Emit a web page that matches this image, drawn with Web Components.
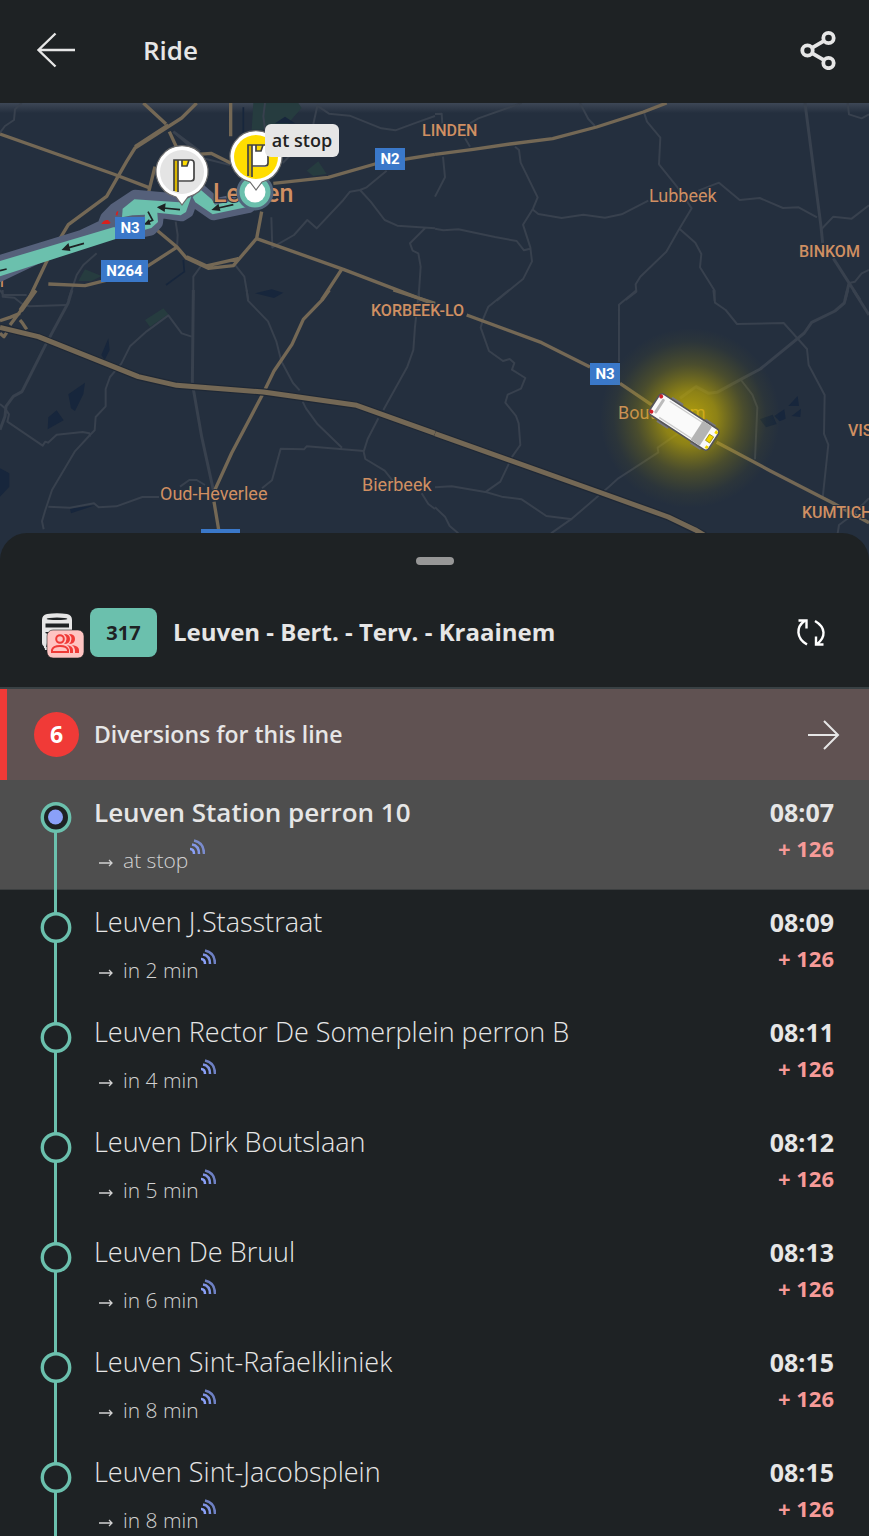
<!DOCTYPE html>
<html lang="en">
<head>
<meta charset="utf-8">
<meta name="viewport" content="width=device-width, initial-scale=1">
<title>Ride</title>
<style>
  html, body {
    height: 100%;
    margin: 0;
    background: #1e2224;
  }
  body {
    --surface: #1e2224;
    --text: #e6e6e6;
    --line: #6bc0ad;
    --alert: #f03a37;
    --late: #f69a98;
    --live: #8aa0f8;
    color: var(--text);
    font-family: "Open Sans", "Noto Sans", sans-serif;
  }
</style>
</head>
<body>
<ride-app>
  <ride-header slot="header">Ride</ride-header>
  <ride-map slot="map"></ride-map>
  <ride-sheet>
    <line-header slot="head" line="317">Leuven - Bert. - Terv. - Kraainem</line-header>
    <diversion-link slot="head" count="6">Diversions for this line</diversion-link>
    <ride-stop current time="08:07" delay="+ 126" eta="at stop">Leuven Station perron 10</ride-stop>
    <ride-stop time="08:09" delay="+ 126" eta="in 2 min">Leuven J.Stasstraat</ride-stop>
    <ride-stop time="08:11" delay="+ 126" eta="in 4 min">Leuven Rector De Somerplein perron B</ride-stop>
    <ride-stop time="08:12" delay="+ 126" eta="in 5 min">Leuven Dirk Boutslaan</ride-stop>
    <ride-stop time="08:13" delay="+ 126" eta="in 6 min">Leuven De Bruul</ride-stop>
    <ride-stop time="08:15" delay="+ 126" eta="in 8 min">Leuven Sint-Rafaelkliniek</ride-stop>
    <ride-stop time="08:15" delay="+ 126" eta="in 8 min">Leuven Sint-Jacobsplein</ride-stop>
  </ride-sheet>
</ride-app>

<script>
'use strict';

/**
 * Base class, renders the template of the element in an open shadow root
 */
class RideElement extends HTMLElement {
  constructor() {
    super();
    this.root = this.attachShadow({mode: 'open'});
  }
  connectedCallback() {
    this.root.innerHTML = this.template;
  }
}

/**
 * Page frame: header, map and the sheet that lies over the map
 */
class RideApp extends RideElement {
  get template() {
    return `
    <style>
      :host {
        display: flex;
        flex-direction: column;
        height: 100vh;
        overflow: hidden;
      }
      main {
        display: flex;
        flex-direction: column;
        flex: 1;
        min-height: 0;
      }
    </style>
    <slot name="header"></slot>
    <main>
      <slot name="map"></slot>
      <slot></slot>
    </main>`;
  }
}
customElements.define('ride-app', RideApp);

class RideHeader extends RideElement {
  get template() {
    return `
    <style>
      :host {
        display: block;
        flex: none;
        background: var(--surface);
      }
      header {
        display: flex;
        align-items: center;
        height: 103px;
        box-sizing: border-box;
        padding: 0 29px 3px 32px;
      }
      h1 {
        flex: 1;
        margin: 0 0 0 63px;
        font-size: 26px;
        line-height: 36px;
        font-weight: 600;
      }
      button {
        display: flex;
        padding: 4px;
        border: 0;
        background: none;
        color: inherit;
      }
      svg {
        fill: none;
        stroke: currentColor;
      }
    </style>
    <header>
      <button aria-label="Back">
        <svg width="40" height="40" viewBox="0 0 40 40" stroke-width="2.4">
          <path d="M39 20H2.500M19.500 3.500L2.500 20l17 16.500"/>
        </svg>
      </button>
      <h1><slot></slot></h1>
      <button aria-label="Share">
        <svg width="36" height="40" viewBox="0 0 36 40" stroke-width="3.800">
          <circle cx="7.500" cy="20.500" r="5.200"/>
          <circle cx="28.500" cy="8" r="5.200"/>
          <circle cx="28.500" cy="33" r="5.200"/>
          <path d="M12 17.800l12-7M12 23.200l12 7"/>
        </svg>
      </button>
    </header>`;
  }
}
customElements.define('ride-header', RideHeader);

/**
 * Map with the route, the stops and the vehicle.
 * Roads are drawn on a grid three times as fine as the one of the labels,
 * cut in four tiles.
 */
class RideMap extends RideElement {
  shield(x, y, width, text) {
    return `<g class="shield"><rect x="${x}" y="${y}" width="${width}" height="22"/>
      <text x="${x + width / 2}" y="${y + 16}">${text}</text></g>`;
  }
  marker(x, y, color) {
    return `<g transform="translate(${x} ${y})">
      <path d="M0 33l-6-8a26 26 0 1 1 12 0z" fill="#fff" stroke="#6b6b6b" stroke-width="1.200"/>
      <circle r="22" fill="${color}"/>
      <path d="M-8-12h4v32l-4-1z" fill="#d9b600"/>
      <path d="M-4-12h14q2 0 2 2V7q0 3-3 3H-4z" fill="#fff"/>
      <path d="M0-12h7l-2 6h-5z" fill="#ffdd00"/>
      <path d="M-8 19v-31H9q3 0 3 3V6q0 3-3 3H-4M-4-12v32M0-12v6h5l2-6" fill="none" stroke="#444" stroke-width="1.700"/>
    </g>`;
  }
  get template() {
    return `
    <style>
      :host {
        display: block;
        flex: none;
        height: 457px;
        overflow: hidden;
        background: #242f3e;
      }
      svg {
        display: block;
        width: 100%;
        height: 100%;
        font-family: Roboto, sans-serif;
      }
      .park { fill: #263c3f; }
      .water { fill: #17263c; }
      .road, .main, .local {
        fill: none;
        stroke: #38414e;
        stroke-width: 6;
        stroke-linejoin: round;
      }
      .local { stroke-width: 9; }
      .main { stroke: #746855; stroke-width: 10; }
      .edge { fill: none; stroke: #1f2835; stroke-width: 22; }
      .wide { stroke-width: 15; }
      .town, .hamlet, .city {
        fill: #d08f62;
        stroke: #242f3e;
        stroke-width: 2;
        paint-order: stroke;
      }
      .town { font-size: 18px; }
      .hamlet { font-size: 16px; font-weight: 500; }
      .city { font-size: 25px; font-weight: 500; }
      .shield rect { fill: #3a78c9; }
      .shield text {
        fill: #fff;
        font-size: 15px;
        font-weight: 700;
        text-anchor: middle;
      }
      .tip { fill: #222; font: 600 18px "Open Sans", "Noto Sans", sans-serif; text-anchor: middle; }
    </style>
    <svg viewBox="0 103 869 457" preserveAspectRatio="xMidYMin slice" role="img" aria-label="Map of the ride">
      <defs>
        <radialGradient id="glow">
          <stop offset="0" stop-color="#d8bd00" stop-opacity=".8"/>
          <stop offset=".3" stop-color="#c8b000" stop-opacity=".64"/>
          <stop offset=".6" stop-color="#b09c00" stop-opacity=".27"/>
          <stop offset=".85" stop-color="#a09000" stop-opacity=".06"/>
          <stop offset="1" stop-color="#a09000" stop-opacity="0"/>
        </radialGradient>
        <linearGradient id="shade" x2="0" y2="1">
          <stop stop-color="#3d4756"/>
          <stop offset="1" stop-color="#3d4756" stop-opacity="0"/>
        </linearGradient>
      </defs>
      <rect y="103" width="869" height="10" fill="url(#shade)"/>

      <g transform="scale(.33333)">
        <!-- parks and water -->
        <path class="park" d="M760 309l-5 80 45 0 40 20 30-45 35-40-10-15h-60zM920 512l35-28 25 38-40 6zM255 808l50 20-30 15-40 0zM435 960l55-35 15 18-55 38z"/>
        <path class="water" d="M825 370l30-20 30 20zM765 880l50-12 35 10-28 16zM325 1015l4 35-15 30-10-15zM255 1148l-5 35-25 50-12-8-8-42zM170 1231l21 30-48 27 2-36zM0 1405l28 15v40L0 1490zM210 1526l75-10-72 24z"/>
        <path d="M550 780l3 35-55 40M730 322v95" fill="none" stroke="#17263c" stroke-width="5"/>

        <!-- north west -->
        <path class="road" d="M65 309L45 328 42 360 15 378 0 398M795 309l-5 40 8 60 70 60-20 20M940 372l12-55 35 24 62 6 95 38 42 6 65-24 54-19M1160 512l-60 50-20 8-30 5-20 25-80 85-28-25-40 45-65 37-3-90M1080 570l32 35 42 55 38 17 113 8M1275 685l-45 45 8 22 17 8 7 40-5 75v30M527 665l6 40-2 40M705 795l28 35 12 70M605 795l-25 35v70M290 760l-40 35-20 30-25 75M520 395l90 80 80 20M0 870l10 15 70 0"/>
        <path class="local" d="M520 395l80 60"/>
        <path class="main" d="M0 402l340 120 105 40M430 309l68 63M508 395l60 130 60 120M590 309l-45 45-140 90-25 40-60 105-115 85-60 100L85 900M405 440l100-65M568 465l65-5 60 30M692 309v100M445 580l20-80M470 690l60 50 30 35 65 30 75-8 70-82 15-80M560 770l60 28 95-22M145 852l110 5 60-15 130-45 85-55M820 550l165-18 140-40 180-29M770 716l260 92 275 105M1025 808L965 900"/>

        <!-- north east -->
        <g transform="translate(1305 0)">
          <path class="road" d="M0 342l20-1 2 30M105 370l25-15 130-46M435 309l25 48 20 21M90 415l15 25M24 470l6 62-30 58M240 440l12 10 5 38 51 104-14 34-30 48 22 68 5 42-26 52-80 66M292 628l18 14 70 12 65-10 65 9 50-10 80-41M0 686l25 5 45-3 110 23 65 12 22 28 18-5M628 340l8 25 40 48-4 80 64 80 34 52-36 60-40 70-78 75-14 23 2 22-32 25M735 688l46 40 18 34-4 40 44 70v30M790 572l62-24 62 52 60-6 70 30 47-2 55 30M1157 690l38-40 55 6 52-40M1238 309l4 34 38 12 22-12M1302 810l-22 10-20 25-18 4"/>
          <path class="local" d="M1110 309l48 370 5 50M1195 775l80 125M1242 850l-12 50"/>
          <path class="main" d="M0 463l115-15 110-16 128-16 132-35 140-45 70-27"/>
        </g>

        <!-- south west -->
        <g transform="translate(0 870)">
          <path class="road" d="M8 0v20l35 3 25 20 20 6 112-4M740 0l4 32 60 62 25 60 15 60 35 65 20 22M908 335l10 20 35 48 73 70M1257 0l-12 110-5 70-18 50-72 130M1135 385l-32 62-12 38 5 22 58 35 40 50M1265 610l20 32 20 15M1092 483l-172-14-8 9-70-2-26 95-30 24M575 140l-30-10-40-54-65 48-50 45-26 52-34 40-13 36v52l-30 32-3 40-14 14-46 50-68 115-20 60-10 34 5 24M270 440l-2-10-20-4-78 8-26 24-8-3-8 12L22 395l5-22-12-18-15-13M145 650l65 3 72-13 14 12 53-3 78-28h50M540 590l28-20 22 0 25 15"/>
          <path class="local" d="M216 0l-12 40-70 130-68 135-26 14-22 30-3 30-15 40M580 0l-3 280 28 160 36 165"/>
          <path class="main" d="M106 0L60 65 30 105M60 70l-30 12-30 10M60 90l8 10 12 18M0 130l12 10 8-12M988 0l-20 28-58 60-34 75-54 80-32 66-95 180-50 110M642 635l15 90M1180 0l125 40"/>
          <path d="M62 62L106 0" stroke="#746855" stroke-width="15"/>
          <path class="edge" d="M0 112l115 28 120 48 180 72 115 26 260 20 280 40 235 84"/>
          <path class="main wide" d="M0 112l115 28 120 48 180 72 115 26 260 20 280 40 235 84"/>
        </g>

        <!-- south east -->
        <g transform="translate(1305 870)">
          <path class="road" d="M222 0l-62 50-15 35-8 28 25 70 42 30 20-6 14 12-7 20 40 25-13 32-40 18-7 24 32 40 8 22 5 65-24 34-36 76-43 30M605 0l-53 44v172M835 0l5 38 32 22 34 42 140-3 70 78 5 48 48 90-2 117 13 32-17 160M0 592l50-3 105 18 45 13 60 8 74 50 78 10M0 652l30 28 14 28 26 22M348 730l64-45 110-95 28-25 120-78-2-14 112-78M918 270l34 44 15 38-7 156M1302 625l-50 50-40 30-4 25"/>
          <path class="local" d="M735 325l48-35 38 20 25-3 70-38 60-32 132-108 22-32 70-34 28-24 10-39M1255 0l47 75"/>
          <path class="main" d="M95 75l225 83 145 73M555 280l95 65M845 457l160 85 190 98 107 58"/>
          <path class="edge" d="M0 431l500 178 200 72 110 55"/>
          <path class="main wide" d="M0 431l500 178 200 72 80 38 50 30"/>
          <path class="water" d="M975 388l38-14 12 28-32 10zM1018 378l30-20 4 28-18 8zM1060 348l28-30 4 30zM1070 378l28-22-2 25z"/>
        </g>
      </g>

      <!-- place names -->
      <text class="hamlet" x="422" y="136">LINDEN</text>
      <text class="town" x="649" y="202">Lubbeek</text>
      <text class="hamlet" x="799" y="257">BINKOM</text>
      <text class="hamlet" x="371" y="316">KORBEEK-LO</text>
      <text class="town" x="618" y="419">Boutersem</text>
      <text class="hamlet" x="848" y="436">VIS</text>
      <text class="town" x="160" y="500">Oud-Heverlee</text>
      <text class="town" x="362" y="491">Bierbeek</text>
      <text class="hamlet" x="802" y="518">KUMTICH</text>
      <text class="town" x="4" y="287" text-anchor="end">n</text>

      <!-- route -->
      <g transform="scale(.33333)">
        <g id="route" fill="#55607a" stroke="#55607a" stroke-width="38" stroke-linejoin="round">
          <path d="M-20 790L340 680l60 18 52-10 18-20 2-18-8-18 81 13 17-10 16-45-38 10-135-12-60 40-25 25-10 25L-20 835z"/>
          <path d="M578 592l22-22 35 30 12 14 90-20 10 26-107 22-52-36z"/>
        </g>
        <path fill="#d9201c" d="M304 672q8-14 20-12l8 8-5 4zM347 645l3-10 5-2-3 14z"/>
        <path fill="#6bc0ad" d="M-10 786L340 682l90 0 5-38-38 2-31 6 2-26 35-28 135 9 36-17-16 46-16 10-70-8 2 28-20 18-30 8L-10 832z"/>
        <path fill="#6bc0ad" d="M578 592l22-24 35 30 10 16 90-20 10 26-107 23-52-36z"/>
        <g stroke="#1e2224" stroke-width="5" fill="none">
          <path d="M540 629l-50-5M700 614l-45 10M252 730l-45 13M0 812l20-5M444 635l14 26-16 6"/>
          <path fill="#1e2224" d="M476 622l18-8-2 18zM640 628l14-12 4 14zM190 748l14-14 4 16zM436 672l10-10 3 10z"/>
        </g>
      </g>
      <text class="city" x="213" y="202">Leuven</text>
      <circle cx="255" cy="192" r="17" fill="#6bc0ad" stroke="#52657c" stroke-width="3"/>
      <circle cx="255" cy="192" r="10.500" fill="#fff"/>
      ${this.shield(375, 148, 30, 'N2')}
      ${this.shield(115, 217, 30, 'N3')}
      ${this.shield(101, 260, 47, 'N264')}
      ${this.shield(590, 363, 30, 'N3')}
      <rect x="201" y="529" width="39" height="22" fill="#3a78c9"/>
      ${this.marker(182, 172, '#e4e4e4')}
      ${this.marker(256, 157, '#ffdd00')}
      <rect x="265" y="124" width="74" height="33" rx="6" fill="#e6e6e6"/>
      <text class="tip" x="302" y="147">at stop</text>

      <!-- vehicle -->
      <circle cx="690" cy="418" r="90" fill="url(#glow)"/>
      <g transform="translate(684 422) rotate(33) scale(.33333)">
        <path d="M-70-40h40M50-40h36M-70 40h40M50 40h36" stroke="#77777c" stroke-width="9"/>
        <rect x="-106" y="-37" width="212" height="74" rx="12" fill="#fafafa" stroke="#55555a" stroke-width="5"/>
        <rect x="-92" y="-25" width="9" height="50" rx="4" fill="#bbb"/>
        <path d="M-70-29H46M-70 29H46" stroke="#ccc" stroke-width="4"/>
        <path d="M46-34h32V34H46z" fill="#b4b4b4"/>
        <path d="M84-11h15v22H84z" fill="#f2d600" stroke="#8a7900" stroke-width="2"/>
        <path d="M94-32l9 2v8h-9zM94 32l9-2v-8h-9z" fill="#f2d600"/>
        <circle cx="-99" cy="-27" r="6" fill="#d0202a"/>
        <circle cx="-99" cy="27" r="6" fill="#d0202a"/>
      </g>
    </svg>`;
  }
}
customElements.define('ride-map', RideMap);

/**
 * Bottom sheet, pulled up over the lower edge of the map
 */
class RideSheet extends RideElement {
  get template() {
    return `
    <style>
      :host {
        display: flex;
        flex-direction: column;
        flex: 1;
        min-height: 0;
        margin-top: -27px;
        border-radius: 27px 27px 0 0;
        background: var(--surface);
        z-index: 1;
      }
      .grip {
        flex: none;
        width: 38px;
        height: 8px;
        margin: 24px auto 12px;
        border-radius: 4px;
        background: #979797;
      }
      .stops {
        flex: 1;
        min-height: 0;
        overflow: auto;
        scrollbar-width: none;
      }
    </style>
    <div class="grip"></div>
    <slot name="head"></slot>
    <div class="stops" role="list"><slot></slot></div>`;
  }
}
customElements.define('ride-sheet', RideSheet);

class LineHeader extends RideElement {
  get template() {
    return `
    <style>
      :host {
        display: flex;
        flex: none;
        align-items: center;
        height: 110px;
        padding: 0 38px 0 41px;
        border-bottom: 2px solid #394144;
      }
      .bus { flex: none; margin-right: 6px; }
      .line {
        flex: none;
        width: 67px;
        margin-right: 16px;
        border-radius: 8px;
        background: var(--line);
        color: #1e2224;
        font-size: 20px;
        line-height: 49px;
        font-weight: 700;
        text-align: center;
      }
      h2 {
        flex: 1;
        margin: 0;
        font-size: 24px;
        line-height: 32px;
        font-weight: 700;
      }
      button {
        display: flex;
        padding: 4px;
        border: 0;
        background: none;
        color: #fff;
      }
    </style>
    <svg class="bus" width="43" height="54" viewBox="0 0 43 54" fill="none">
      <path d="M1 15q0-5 5-6 10-1.500 20 0 5 1 5 6v12H4.500v15H6v3H4q0-3-1.500-4Q1 40 1 38z" fill="#e6e6e6"/>
      <path d="M5.500 14q1-1.500 10.500-1.500T26.500 14q-2 1-10.500 1t-10.500-1zM4.500 18.500h23.500v4H4.500z" fill="#1e2224"/>
      <path d="M4 28l3 1v4l-2 10H3z" fill="#e6e6e6"/>
      <rect x="6" y="25" width="37" height="28" rx="6" fill="#ffc4c2" stroke="#1e2224" stroke-width=".600"/>
      <g stroke="#f03a37" stroke-width="2">
        <circle cx="19" cy="34" r="3.800"/>
        <path d="M11 47v-2q1-4 8-4t8 4v2z"/>
      </g>
      <path fill="#f03a37" d="M23 29q6 0 6 5t-6 5q5-5 0-10zM28 29q6 0 6 5t-6 5q5-5 0-10zM26 40q6 1 6 5v3h-3v-3q0-3-3-5zM31 40q7 1 7 5v3h-4v-3q0-3-3-5z"/>
    </svg>
    <span class="line">${this.getAttribute('line')}</span>
    <h2><slot></slot></h2>
    <button aria-label="Swap direction">
      <svg width="32" height="32" viewBox="0 0 32 32" fill="none" stroke="currentColor" stroke-width="2.400">
        <path d="M12 28.500C1 22 1 11 9.500 5M3.500 4.500h8v8M20 5c11 6.500 11 16 2 23M28.500 28.500h-7.500v-8"/>
      </svg>
    </button>`;
  }
}
customElements.define('line-header', LineHeader);

class DiversionLink extends RideElement {
  get template() {
    return `
    <style>
      :host {
        display: block;
        flex: none;
      }
      a {
        display: flex;
        align-items: center;
        gap: 15px;
        height: 91px;
        box-sizing: border-box;
        padding: 0 29px 1px 27px;
        border-left: 7px solid var(--alert);
        background: #605252;
        color: inherit;
        font-size: 23px;
        line-height: 32px;
        font-weight: 600;
        text-decoration: none;
      }
      .count {
        width: 45px;
        border-radius: 50%;
        background: var(--alert);
        color: #fff;
        font-weight: 700;
        line-height: 45px;
        text-align: center;
      }
      .label { flex: 1; }
    </style>
    <a href="#diversions">
      <span class="count">${this.getAttribute('count')}</span>
      <span class="label"><slot></slot></span>
      <svg width="33" height="32" viewBox="0 0 33 32" fill="none" stroke="currentColor" stroke-width="2">
        <path d="M1 17h30M17 3l14 14-14 14"/>
      </svg>
    </a>`;
  }
}
customElements.define('diversion-link', DiversionLink);

/**
 * One stop of the ride
 * @attr {string} time Planned time
 * @attr {string} delay Delay in minutes
 * @attr {string} eta Expected arrival
 * @attr {boolean} current The vehicle is at this stop
 */
class RideStop extends RideElement {
  connectedCallback() {
    super.connectedCallback();
    this.setAttribute('role', 'listitem');
  }
  get template() {
    return `
    <style>
      :host {
        display: grid;
        grid-template-columns: 40px 1fr auto;
        column-gap: 14px;
        height: 110px;
        box-sizing: border-box;
        padding: 0 35px 0 40px;
      }
      :host([current]) {
        border-bottom: 1px solid #3c3f40;
        background: #4e4e4e;
      }
      .rail { width: 32px; height: 100%; overflow: visible; }
      .rail line { stroke: var(--line); stroke-width: 3; }
      .rail circle { stroke: var(--line); stroke-width: 3.400; fill: var(--surface); }
      .rail .here { stroke: none; fill: var(--live); }
      :host(:not([current])) .here { display: none; }
      .stop, .times {
        display: flex;
        flex-direction: column;
        padding-top: 14px;
      }
      .times {
        gap: 2px;
        text-align: right;
        font-weight: 700;
      }
      .stop { gap: 14px; font-weight: 300; }
      .name, time { line-height: 36px; }
      .name { font-size: 27px; }
      time { font-size: 25px; }
      :host([current]) .name { font-size: 26px; font-weight: 600; }
      .delay {
        color: var(--late);
        font-size: 22px;
        line-height: 32px;
      }
      .eta {
        display: flex;
        font-size: 21px;
        line-height: 32px;
        color: #d2d2d2;
      }
      .arrow { margin: 11px 10px 0 5px; }
      .live { color: var(--live); margin: -5px 0 0 1px; }
    </style>
    <svg class="rail" aria-hidden="true">
      <line x1="15.500" x2="15.500" y1="${this.hasAttribute('current') ? 37 : 0}" y2="110"/>
      <circle cx="16" cy="37.500" r="13.700"/>
      <circle class="here" cx="15.500" cy="37" r="7.500"/>
    </svg>
    <div class="stop">
      <span class="name"><slot></slot></span>
      <span class="eta">
        <svg class="arrow" width="14" height="14" viewBox="0 0 14 14" fill="none" stroke="currentColor" stroke-width="1.300">
          <path d="M0 8h13M10 5l3 3-3 3"/>
        </svg>
        ${this.getAttribute('eta')}
        <svg class="live" width="16" height="16" viewBox="0 0 16 16" fill="none" stroke="currentColor" stroke-width="2.500">
          <path d="M1 10q4 0 4 5"/>
          <path d="M3 5.500q7 1 7 9.500" opacity=".9"/>
          <path d="M5 1.500q10 2 10 13.500" opacity=".75"/>
        </svg>
      </span>
    </div>
    <div class="times">
      <time>${this.getAttribute('time')}</time>
      <span class="delay">${this.getAttribute('delay')}</span>
    </div>`;
  }
}
customElements.define('ride-stop', RideStop);
</script>
</body>
</html>
